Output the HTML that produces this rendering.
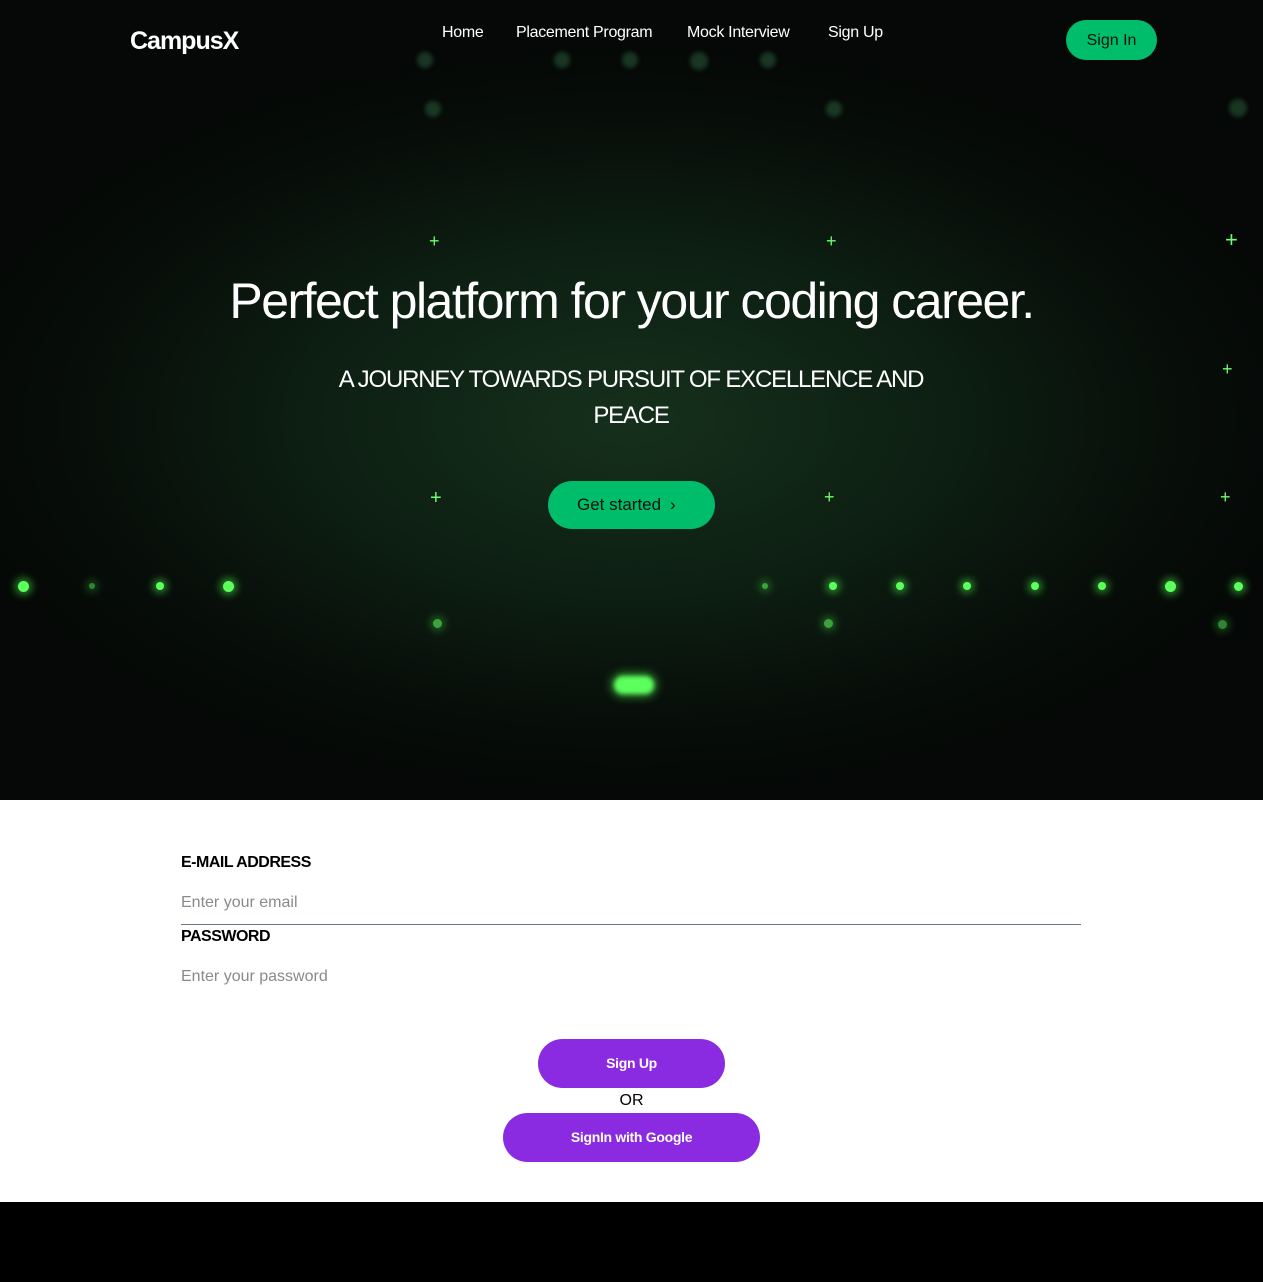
<!DOCTYPE html>
<html><head><style>
*{margin:0;padding:0;box-sizing:border-box}
body{width:1263px;height:1282px;background:#000;font-family:"Liberation Sans",sans-serif;overflow:hidden}
.hero{position:absolute;left:0;top:0;width:1263px;height:800px;overflow:hidden;
background:radial-gradient(ellipse 700px 380px at 630px 420px,#16301c 0%,#0d1f12 45%,#070d09 80%,#050806 100%);}
.dot{position:absolute;border-radius:50%;background:#5dff5d;box-shadow:0 0 8px 3px rgba(80,255,80,.5)}
.dim{position:absolute;border-radius:50%;background:rgba(60,140,90,.35);filter:blur(2px)}
.plus{position:absolute;color:#6dff6d;font-size:18px;line-height:1}
.logo{position:absolute;left:130px;top:27px;color:#fff;font-weight:bold;font-size:25px;letter-spacing:-1px}
.nav{position:absolute;top:24px;color:#fff;font-size:16px;letter-spacing:-0.3px}
.btn-in{position:absolute;left:1066px;top:20px;width:91px;height:40px;border-radius:20px;background:#00bd6c;color:#06130b;font-size:16px;text-align:center;line-height:42px}
h1{position:absolute;left:0;width:1263px;top:272px;text-align:center;color:#fff;font-weight:normal;font-size:50px;letter-spacing:-1.5px}
.sub{position:absolute;left:291px;width:680px;top:362px;text-align:center;color:#fff;font-size:24px;line-height:36px;letter-spacing:-1.2px}
.gs{position:absolute;left:548px;top:481px;width:167px;height:48px;border-radius:24px;background:#00bd6c;color:#06130b;font-size:17px;line-height:48px;padding-left:29px}
.gs span{position:absolute;left:122px;top:0}
.form{position:absolute;left:0;top:800px;width:1263px;height:402px;background:#fff}
.lbl{position:absolute;left:181px;font-weight:bold;font-size:16px;color:#000;letter-spacing:-0.5px}
.ph{position:absolute;left:181px;font-size:16px;color:#8a8a8a}
.line{position:absolute;left:181px;top:124px;width:900px;height:1px;background:#6b7686}
.pb{position:absolute;height:49px;border-radius:25px;background:#8a2be2;color:#fff;font-weight:bold;font-size:14px;text-align:center;line-height:49px;letter-spacing:-0.3px}
</style></head><body>
<div class="hero">
<div class="dim" style="left:417px;top:52px;width:16px;height:16px"></div>
<div class="dim" style="left:554px;top:52px;width:16px;height:16px"></div>
<div class="dim" style="left:622px;top:52px;width:16px;height:16px"></div>
<div class="dim" style="left:690px;top:52px;width:18px;height:18px"></div>
<div class="dim" style="left:760px;top:52px;width:16px;height:16px"></div>
<div class="dim" style="left:425px;top:101px;width:16px;height:16px"></div>
<div class="dim" style="left:826px;top:101px;width:16px;height:16px"></div>
<div class="dim" style="left:1229px;top:99px;width:18px;height:18px"></div>
<div class="dot" style="left:18px;top:581px;width:11px;height:11px"></div>
<div class="dot" style="left:156px;top:582px;width:8px;height:8px"></div>
<div class="dot" style="left:223px;top:581px;width:11px;height:11px"></div>
<div class="dot" style="left:89px;top:583px;width:6px;height:6px;opacity:.5"></div>
<div class="dot" style="left:762px;top:583px;width:6px;height:6px;opacity:.6"></div>
<div class="dot" style="left:829px;top:582px;width:8px;height:8px"></div>
<div class="dot" style="left:896px;top:582px;width:8px;height:8px"></div>
<div class="dot" style="left:963px;top:582px;width:8px;height:8px"></div>
<div class="dot" style="left:1031px;top:582px;width:8px;height:8px"></div>
<div class="dot" style="left:1098px;top:582px;width:8px;height:8px"></div>
<div class="dot" style="left:1165px;top:581px;width:11px;height:11px"></div>
<div class="dot" style="left:1234px;top:582px;width:9px;height:9px"></div>
<div class="dot" style="left:433px;top:619px;width:9px;height:9px;opacity:.6"></div>
<div class="dot" style="left:824px;top:619px;width:9px;height:9px;opacity:.6"></div>
<div class="dot" style="left:1218px;top:620px;width:9px;height:9px;opacity:.5"></div>
<div class="dot" style="left:614px;top:676px;width:40px;height:18px;border-radius:9px;filter:blur(2px)"></div>
<div class="plus" style="left:429px;top:232px">+</div>
<div class="plus" style="left:826px;top:232px">+</div>
<div class="plus" style="left:1225px;top:229px;font-size:22px">+</div>
<div class="plus" style="left:1222px;top:360px">+</div>
<div class="plus" style="left:430px;top:488px;font-size:20px">+</div>
<div class="plus" style="left:824px;top:488px">+</div>
<div class="plus" style="left:1220px;top:488px">+</div>
</div>
<div class="logo">CampusX</div>
<div class="nav" style="left:442px">Home</div>
<div class="nav" style="left:516px">Placement Program</div>
<div class="nav" style="left:687px">Mock Interview</div>
<div class="nav" style="left:828px">Sign Up</div>
<div class="btn-in">Sign In</div>
<h1>Perfect platform for your coding career.</h1>
<div class="sub">A JOURNEY TOWARDS PURSUIT OF EXCELLENCE AND<br>PEACE</div>
<div class="gs">Get started<span>›</span></div>
<div class="form">
<div class="lbl" style="top:54px">E-MAIL ADDRESS</div>
<div class="ph" style="top:94px">Enter your email</div>
<div class="line"></div>
<div class="lbl" style="top:128px">PASSWORD</div>
<div class="ph" style="top:168px">Enter your password</div>
<div class="pb" style="left:538px;top:239px;width:187px">Sign Up</div>
<div style="position:absolute;left:0;width:1263px;text-align:center;top:292px;font-size:16px;color:#000">OR</div>
<div class="pb" style="left:503px;top:313px;width:257px">SignIn with Google</div>
</div>
</body></html>
